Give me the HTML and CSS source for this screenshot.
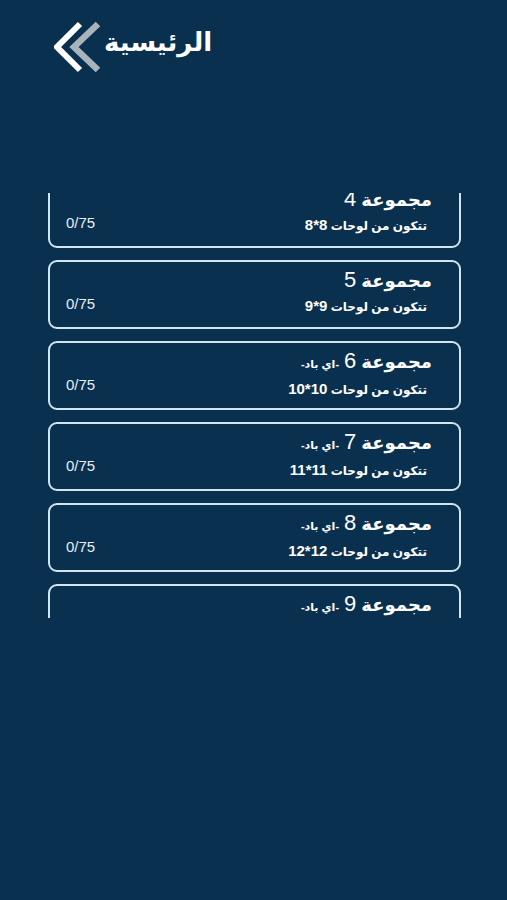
FILE: index.html
```html
<!DOCTYPE html>
<html lang="ar">
<head>
    <meta charset="UTF-8">
    <title>المجموعات</title>
    <link rel="stylesheet" href="styles.css">
</head>
<body>
<div class="page">
    <div class="header">
        <a class="back" href="javascript:void(0);">
            <svg class="back-icon" width="48" height="52" viewBox="0 0 48 52">
                <polyline points="44,3 20,26 44,49" fill="none" stroke="#a9b3bc" stroke-width="6.5"/>
                <polyline points="26,3 3,26 26,49" fill="none" stroke="#ffffff" stroke-width="6"/>
            </svg>
            <span class="back-text">الرئيسية</span>
        </a>
    </div>
    <div class="list-view">
        <div class="list">
            <div class="group" dir="rtl">
                <div class="group-info">
                    <div class="group-title">مجموعة <span class="num">4</span></div>
                    <div class="group-sub">تتكون من لوحات <span class="num">8*8</span></div>
                </div>
                <div class="group-score">0/75</div>
            </div>
            <div class="group" dir="rtl">
                <div class="group-info">
                    <div class="group-title">مجموعة <span class="num">5</span></div>
                    <div class="group-sub">تتكون من لوحات <span class="num">9*9</span></div>
                </div>
                <div class="group-score">0/75</div>
            </div>
            <div class="group" dir="rtl">
                <div class="group-info">
                    <div class="group-title">مجموعة <span class="num">6</span> <span class="tag">-اي باد-</span></div>
                    <div class="group-sub">تتكون من لوحات <span class="num">10*10</span></div>
                </div>
                <div class="group-score">0/75</div>
            </div>
            <div class="group" dir="rtl">
                <div class="group-info">
                    <div class="group-title">مجموعة <span class="num">7</span> <span class="tag">-اي باد-</span></div>
                    <div class="group-sub">تتكون من لوحات <span class="num">11*11</span></div>
                </div>
                <div class="group-score">0/75</div>
            </div>
            <div class="group" dir="rtl">
                <div class="group-info">
                    <div class="group-title">مجموعة <span class="num">8</span> <span class="tag">-اي باد-</span></div>
                    <div class="group-sub">تتكون من لوحات <span class="num">12*12</span></div>
                </div>
                <div class="group-score">0/75</div>
            </div>
            <div class="group" dir="rtl">
                <div class="group-info">
                    <div class="group-title">مجموعة <span class="num">9</span> <span class="tag">-اي باد-</span></div>
                    <div class="group-sub">تتكون من لوحات <span class="num">13*13</span></div>
                </div>
                <div class="group-score">0/75</div>
            </div>
        </div>
    </div>
</div>
</body>
</html>
```

FILE: styles.css
```css
html, body {
    margin: 0;
    padding: 0;
    background: #09304f;
}
.page {
    width: 507px;
    height: 900px;
    background: #09304f;
    color: #ffffff;
    font-family: "Liberation Sans", "DejaVu Sans", sans-serif;
}
.header {
    height: 193px;
    padding: 20px 0 0 54px;
    box-sizing: border-box;
}
.back {
    display: flex;
    align-items: flex-start;
    gap: 2px;
    color: #ffffff;
    text-decoration: none;
}
.back-icon {
    display: block;
    margin-top: 1px;
}
.back-text {
    font-size: 26px;
    font-weight: bold;
    line-height: 44px;
}
.list-view {
    margin-left: 48px;
    width: 413px;
    height: 425px;
    overflow: hidden;
}
.list {
    display: flex;
    flex-direction: column;
    gap: 12px;
    margin-top: -14px;
}
.group {
    height: 69px;
    box-sizing: border-box;
    border: 2px solid #cfe5f2;
    border-radius: 9px;
    display: flex;
    justify-content: space-between;
    padding: 4px 27px 0 16px;
    flex-shrink: 0;
}
.group-info {
    display: flex;
    flex-direction: column;
    gap: 1px;
}
.group-title {
    font-size: 18px;
    font-weight: bold;
    line-height: 28px;
}
.group-title .num {
    font-size: 22px;
    font-weight: normal;
}
.tag {
    font-size: 11px;
}
.group-sub {
    font-size: 12px;
    font-weight: bold;
    line-height: 20px;
    padding-right: 5px;
}
.group-sub .num {
    font-size: 15px;
}
.group-score {
    align-self: flex-start;
    margin-top: 28px;
    font-size: 15px;
    line-height: 20px;
    color: #e6eef4;
}
```
